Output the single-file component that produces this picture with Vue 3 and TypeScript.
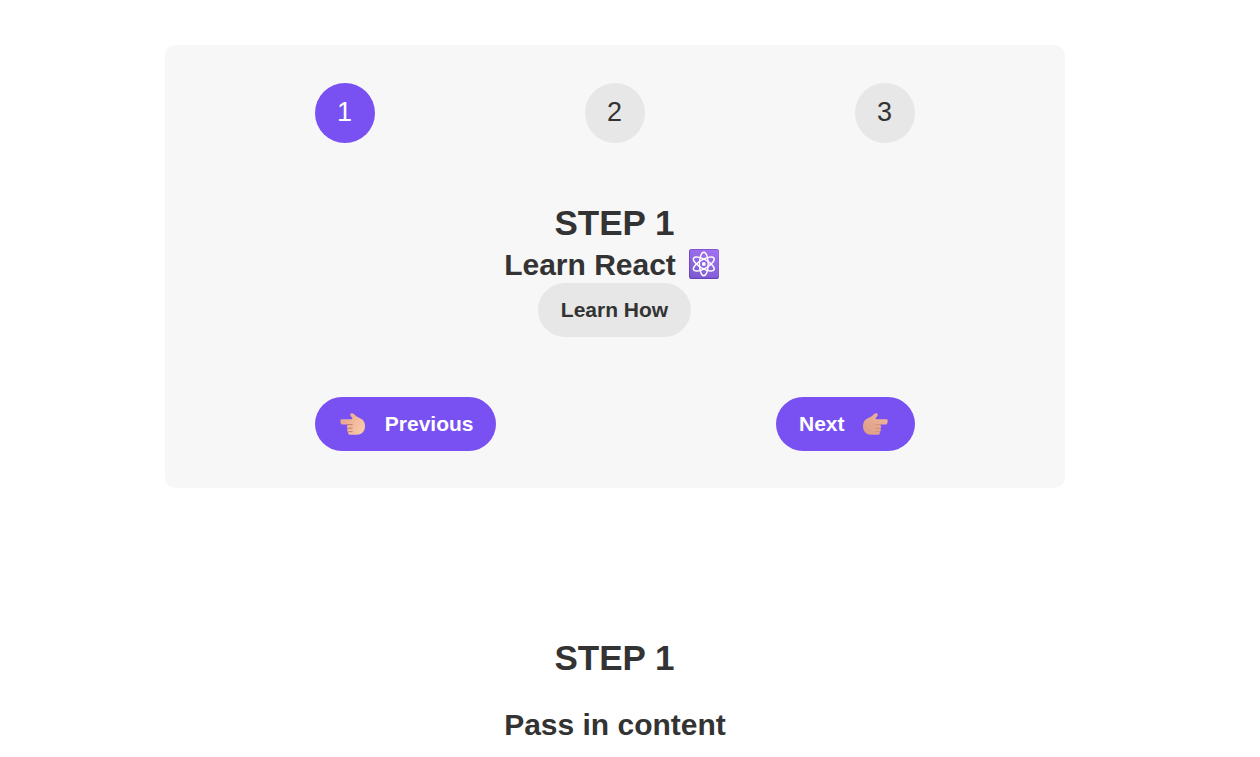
<script setup lang="ts">
import { ref } from 'vue'

const messages: string[] = ['Learn React', 'Apply for jobs', 'Invest your new income']
const step = ref(1)

function previous(): void {
  if (step.value > 1) step.value--
}
function next(): void {
  if (step.value < messages.length) step.value++
}
</script>

<template>
  <main class="page">
    <section class="steps">
      <div class="numbers">
        <div v-for="n in messages.length" :key="n" class="number" :class="{ active: step >= n }">{{ n }}</div>
      </div>

      <div class="message">
        <h3>STEP {{ step }}</h3>
        <div class="headline">
          <span>{{ messages[step - 1] }}</span>
          <svg v-if="step === 1" class="atom" viewBox="0 0 30 30">
            <defs>
              <linearGradient id="tile" x1="0.7" y1="0" x2="0.3" y2="1">
                <stop offset="0" stop-color="#a070f0" />
                <stop offset="1" stop-color="#7f5cd4" />
              </linearGradient>
            </defs>
            <rect width="30" height="30" rx="2.8" fill="#6541b5" />
            <rect x="0.8" y="0.4" width="29" height="28.4" rx="2.4" fill="url(#tile)" />
            <g fill="none" stroke="#fff" stroke-width="1.4">
              <ellipse cx="14.8" cy="15" rx="4.4" ry="11.8" />
              <ellipse cx="14.8" cy="15" rx="4.4" ry="11.8" transform="rotate(60 14.8 15)" />
              <ellipse cx="14.8" cy="15" rx="4.4" ry="11.8" transform="rotate(120 14.8 15)" />
            </g>
            <circle cx="14.8" cy="15" r="1.9" fill="#fff" />
          </svg>
        </div>
        <button class="btn light">Learn How</button>
      </div>

      <div class="buttons">
        <button class="btn" @click="previous">
          <svg class="hand left" viewBox="0 0 26 22">
            <defs>
              <linearGradient id="skinLeft" x1="0" y1="0" x2="1" y2="0.4">
                <stop offset="0" stop-color="#e5a18c" />
                <stop offset="1" stop-color="#f8c7a5" />
              </linearGradient>
            </defs>
            <path d="M1 6.2H11.6L12.6 5.2C11.3 4 10 2.3 10.3 1.1C10.8 0 12.8 0 13.8 1L16.6 3.6L21.5 5.9C24 7.3 25 10 25 13.3C25 18.7 21.6 21.8 16.5 21.8H10C8.2 21.8 7.6 20 8.5 18.9C7 18.4 6.7 16.7 7.8 15.7C6.6 15 6.5 13.2 7.6 12.3V11.4H1.8C.2 11.1-.1 6.9 1 6.2Z" fill="url(#skinLeft)" />
            <path d="M7.8 11.6H12.2M8 15.2H12M8.7 18.6H12.1" fill="none" stroke="#b96f65" stroke-width="0.8" stroke-linecap="round" />
          </svg>
          <span>Previous</span>
        </button>
        <button class="btn" @click="next">
          <span>Next</span>
          <svg class="hand right" viewBox="0 0 26 22">
            <defs>
              <linearGradient id="skinRight" x1="0" y1="1" x2="1" y2="0">
                <stop offset="0" stop-color="#dc9b87" />
                <stop offset="1" stop-color="#f0b899" />
              </linearGradient>
            </defs>
            <path d="M25 6.2H14.4L13.4 5.2C14.7 4 16 2.3 15.7 1.1C15.2 0 13.2 0 12.2 1L9.4 3.6L4.5 5.9C2 7.3 1 10 1 13.3C1 18.7 4.4 21.8 9.5 21.8H16C17.8 21.8 18.4 20 17.5 18.9C19 18.4 19.3 16.7 18.2 15.7C19.4 15 19.5 13.2 18.4 12.3V11.4H24.2C25.8 11.1 26.1 6.9 25 6.2Z" fill="url(#skinRight)" />
            <path d="M18.2 11.6H14M18 15.2H14.2M17.3 18.6H14" fill="none" stroke="#c98673" stroke-width="0.7" stroke-linecap="round" />
          </svg>
        </button>
      </div>
    </section>

    <section class="message standalone">
      <h3>STEP 1</h3>
      <p>Pass in content</p>
    </section>
  </main>
</template>

<style>
body {
  background: #fff;
  overflow: hidden;
}
</style>

<style scoped>
.page {
  box-sizing: border-box;
  width: 1230px;
  height: 757px;
  padding-top: 45px;
  overflow: hidden;
  color: #333;
  font-family: "Liberation Sans", Arial, sans-serif;
}
.steps {
  box-sizing: border-box;
  width: 900px;
  height: 443px;
  margin: 0 auto;
  padding: 38px 150px 37px;
  border-radius: 10.5px;
  background: #f7f7f7;
  display: flex;
  flex-direction: column;
}
.numbers,
.buttons {
  display: flex;
  justify-content: space-between;
}
.number {
  box-sizing: border-box;
  width: 60px;
  height: 60px;
  padding: 0 1px 1px 0;
  border-radius: 50%;
  background: #e7e7e7;
  display: flex;
  align-items: center;
  justify-content: center;
  font-size: 27px;
}
.number.active {
  background: #7950f2;
  color: #fff;
}
.message {
  display: flex;
  flex-direction: column;
  align-items: center;
  font-size: 30px;
  font-weight: bold;
}
.steps .message {
  flex: 1;
  padding-top: 60px;
}
h3 {
  margin: 0;
  padding-right: 1px;
  font-size: 35px;
  line-height: 40px;
}
.headline {
  display: flex;
  align-items: center;
  height: 40px;
  line-height: 40px;
  padding-right: 7px;
}
.headline span {
  padding-top: 3px;
}
.atom {
  width: 30px;
  height: 30px;
  margin: 2px 0 0 13px;
}
.btn {
  height: 54px;
  padding: 0 22.5px;
  border: 0;
  border-radius: 150px;
  background: #7950f2;
  color: #fff;
  display: flex;
  align-items: center;
  font: bold 21px/24px "Liberation Sans", Arial, sans-serif;
  cursor: pointer;
}
.btn.light {
  margin-right: 1px;
  padding: 0 22.8px;
  background: #e7e7e7;
  color: #333;
}
.hand {
  width: 26px;
  height: 22px;
}
.hand.left {
  margin: 0 19px 0 2.3px;
}
.hand.right {
  margin: 0 5px 0 17px;
}
.standalone {
  margin-top: 150px;
}
.standalone p {
  margin: 30px 0 0;
  line-height: 34px;
}
</style>
